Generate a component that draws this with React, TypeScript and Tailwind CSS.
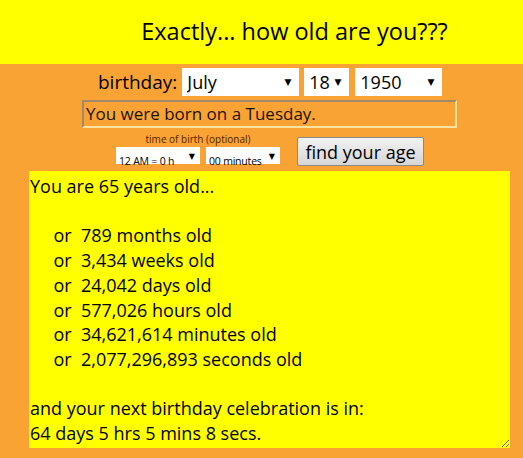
import React from 'react';

const FONT = '[font-family:"Open_Sans","DejaVu_Sans",sans-serif]';

const ageText = `You are 65 years old...

     or  789 months old
     or  3,434 weeks old
     or  24,042 days old
     or  577,026 hours old
     or  34,621,614 minutes old
     or  2,077,296,893 seconds old

and your next birthday celebration is in:
64 days 5 hrs 5 mins 8 secs.`;

interface FakeSelectProps {
  value: string;
  options: string[];
  className: string;
  small?: boolean;
}

const FakeSelect: React.FC<FakeSelectProps> = ({ value, options, className, small }) => {
  return (
    <div className={`relative bg-white ${className}`}>
      <select
        defaultValue={value}
        className={`appearance-none w-full h-full bg-transparent outline-none text-black ${
          small ? 'pl-[3px] text-[10.5px] leading-[17px] tracking-[-0.2px]' : 'pl-[5px] text-[18px]'
        }`}
      >
        {options.map((o) => (
          <option key={o} value={o}>
            {o}
          </option>
        ))}
      </select>
      <span
        className={`pointer-events-none absolute top-1/2 -translate-y-1/2 text-black ${
          small ? 'right-[5px] text-[8px]' : 'right-[8px] text-[9px]'
        }`}
      >
        ▼
      </span>
    </div>
  );
};

const App: React.FC = () => {
  return (
    <div className={`w-[523px] h-[458px] bg-[#f9a335] ${FONT} text-black overflow-hidden`}>
      <div className="h-[64px] bg-[#ffff00] flex items-center justify-center pl-[66px]">
        <h1 className="text-[23.5px] leading-none">Exactly... how old are you???</h1>
      </div>

      <div className="flex items-center pl-[98px] pt-[4px] h-[32px]">
        <span className="text-[19px] mr-[5px]">birthday:</span>
        <FakeSelect value="July" options={['January', 'July']} className="w-[117px] h-[28px]" />
        <FakeSelect value="18" options={['1', '18']} className="w-[45px] h-[28px] ml-[5px]" />
        <FakeSelect value="1950" options={['1949', '1950']} className="w-[87px] h-[28px] ml-[6px]" />
      </div>

      <div className="ml-[82px] mt-[4px] w-[375px] h-[28px] border-2 border-t-[#a3896a] border-l-[#a3896a] border-b-[#fde3a0] border-r-[#fde3a0] flex items-center pl-[2px] text-[17px] text-[#1a1206]">
        You were born on a Tuesday.
      </div>

      <div className="flex items-start pl-[116px] pt-[5px] h-[43px]">
        <div className="flex flex-col items-center w-[164px]">
          <span className="text-[10px] leading-[12px] text-[#5a1d00]">time of birth (optional)</span>
          <div className="flex mt-[2px] gap-[6px]">
            <FakeSelect small value="12 AM = 0 h" options={['12 AM = 0 h']} className="w-[84px] h-[17px]" />
            <FakeSelect small value="00 minutes" options={['00 minutes']} className="w-[74px] h-[17px]" />
          </div>
        </div>
        <button className="ml-[17px] mt-[4px] w-[127px] h-[29px] rounded-[2px] border border-[#8a8a8a] bg-gradient-to-b from-[#f2f2f2] to-[#d6d6d6] text-[18px] leading-none text-black">
          find your age
        </button>
      </div>

      <textarea
        readOnly
        defaultValue={ageText}
        className={`block ml-[29px] w-[481px] h-[277px] bg-[#ffff00] ${FONT} text-[18px] leading-[24.7px] pl-[1px] pt-[3px] outline-none border-0 text-black`}
      />
    </div>
  );
};

export default App;
